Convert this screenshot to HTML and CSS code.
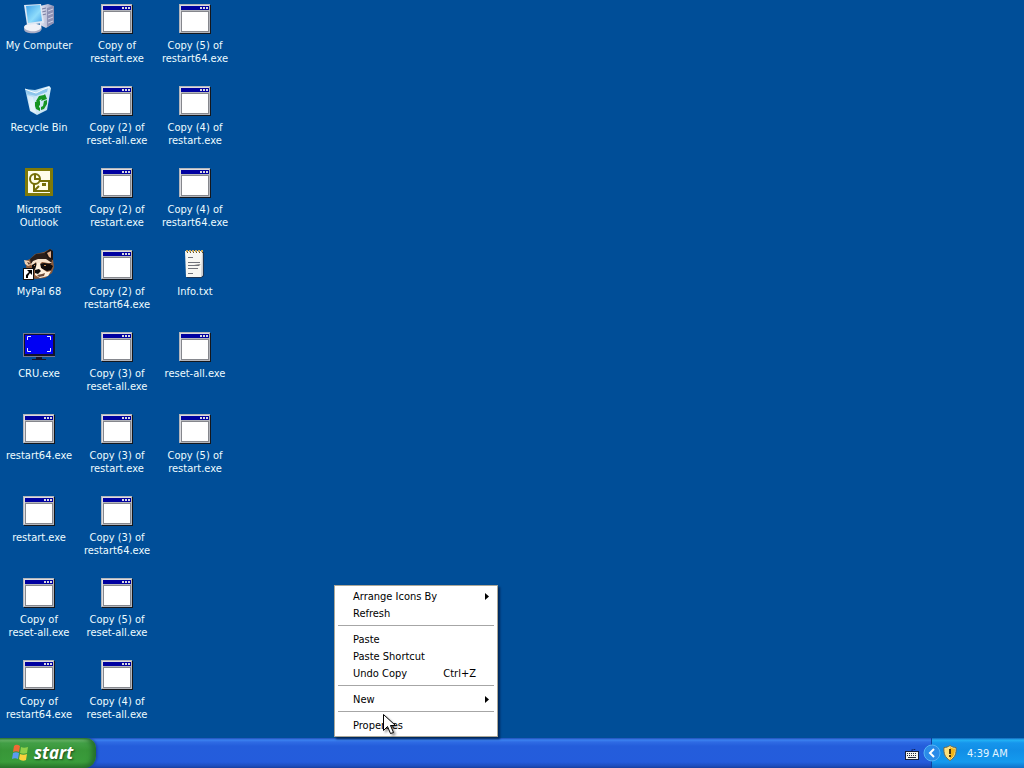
FILE: index.html
```html
<!DOCTYPE html>
<html lang="en">
<head>
<meta charset="utf-8">
<title>Desktop</title>
<link rel="stylesheet" href="styles.css">
</head>
<body>
<svg class="defs" aria-hidden="true">
  <defs>
    <linearGradient id="screen" x1="0" y1="0" x2="1" y2="1"><stop offset="0" stop-color="#3fa2ea"/><stop offset=".6" stop-color="#8fdcfb"/><stop offset="1" stop-color="#4aa4ea"/></linearGradient>
    <linearGradient id="case" x1="0" y1="0" x2="1" y2="0"><stop offset="0" stop-color="#e4e6f2"/><stop offset=".55" stop-color="#b9bdd6"/><stop offset="1" stop-color="#8a8fb2"/></linearGradient>
    <linearGradient id="bin" x1="0" y1="0" x2="1" y2="1"><stop offset="0" stop-color="#7dbdea"/><stop offset=".45" stop-color="#d4ecfa"/><stop offset="1" stop-color="#c4e0f0"/></linearGradient>
    <symbol id="exe" viewBox="0 0 32 32">
      <path fill="#15171c" d="M1 2h31v29H1z"/>
      <path fill="#b4b6bc" d="M0 1h31v29H0z"/>
      <path fill="#dcdce0" d="M1 2h29v1H1zM1 2h1v27H1z"/>
      <path fill="#85878d" d="M2 8h28v21H2z"/>
      <path fill="#fff" d="M3 9h26v19H3z"/>
      <path fill="#0000a0" d="M2 3h28v4H2z"/>
      <path fill="#d8d8e0" d="M21 4h2v2h-2zM24 4h2v2h-2zM27 4h2v2h-2z"/>
    </symbol>
  </defs>
</svg>
<main class="desktop">
  <button class="item"><svg class="icon" viewBox="0 0 32 32">
    <path fill="url(#case)" d="M17 3l8-2 6 2v17l-8 5-6-3z"/><path fill="#8d91b4" d="M24 5l7-2v17l-7 4z"/><path stroke="#777ca0" d="M19 6l4-1M19 9l4-1M19 12l4-1"/><path stroke="#cfd2e6" d="M25 8l5-2M25 12l5-2M25 16l5-2M25 20l5-2"/>
    <path fill="#a9acc4" d="M1 26c1-4 6-4 9-5l8 2c2 3 0 6-5 7-5 1-12 0-12-4z"/><path fill="#f1f1f7" d="M1 24c1-3 5-3 8-4l9 2c1 3-1 5-5 6-5 1-12-1-12-4z"/>
    <path fill="#dfe8f4" d="M1 2l17-1 3 19-17 2z"/><path fill="url(#screen)" d="M3 3l14-1 2 16-14 2z"/></svg><span class="label">My Computer</span></button>
  <button class="item"><svg class="icon" viewBox="0 0 32 32">
    <path fill="url(#bin)" d="M2 4l10 1 14-4 2 2-4 22-10 5-7-4z"/><path fill="#8ec6ec" d="M4 6l8 2 13-5-1 4-11 4-8-2z"/><path fill="none" stroke="#f4fbff" d="M2 4l5 2 6 2 8-4 6-2"/><path fill="#fff" opacity=".45" d="M4 10l6 2 3 16-5-2z"/>
    <g fill="#169522"><path d="M13 16l3-5 5-1 1-1 2 5-6 2 1-2-2 1-2 3z"/><path d="M21 16l3-1 0 4-3 5-3 1v-3l2-1z"/><path d="M12 17l5-1 0 5-1-1 0 2 1 1v3l-4-2-1-3z"/></g></svg><span class="label">Recycle Bin</span></button>
  <button class="item"><svg class="icon" viewBox="0 0 32 32">
    <path fill="#807a08" d="M2 1h28v28H2z"/><path fill="#fffde8" d="M5 4h22v22H5z"/><g fill="#fffde8" stroke="#746e08" stroke-width="2"><path d="M11 14h15v10H11z"/><circle cx="12" cy="12" r="5"/><path fill="none" d="M12 8v4h4M12 23l4-4"/><path fill="#746e08" stroke="none" d="M19 16h4v3h-4z"/></g></svg><span class="label">Microsoft Outlook</span></button>
  <button class="item"><svg class="icon" viewBox="0 0 32 32">
    <path fill="#8b5a3a" d="M2 12l5-2 5-5 9-2 6-3 2 1 1 9 1 8-2 6-7 5-10 1-8-8z"/>
    <path fill="#2b1e1a" d="M7 10l6-5 8-1 4 3 4 4-1 4-7-4-6 0-7 4z"/>
    <path fill="#1d1513" d="M21 4l6-4 3 2v9l-4-1z"/><path fill="#e3b18f" d="M24 4l4-2 0 7-2-1z"/>
    <path fill="#f0d0b2" d="M1 11l5 1 2 4-3 1-3-2z"/><path fill="#49302a" d="M4 13l3 1-1 2z"/>
    <path fill="#f7e3cd" d="M8 15l2-3 5-2 8 0 6 4-4 0-6-1-3 3-2 0-1-3-4 4z"/>
    <path fill="#0f0c0c" d="M9 16l4-2 1 4-3 3-2-2zM17 15l4-1 6 1 3 2-2 4-4 1-5-2-2-2z"/>
    <path fill="#fff0dc" d="M14 14l3 0 1 5 6 4 4-1-3 5-8 2-5-3 0-5z"/>
    <path fill="#0e0c0c" d="M12 21l4-1 2 2-3 3-3-1z"/><path fill="#6e4b38" d="M14 26l5-1 3-1-1 3-5 1z"/>
    <path fill="#c88c50" d="M21 16h2v1h-2zM11 16h1v1h-1z"/>
    <path fill="#111" d="M0 19h11v12H0z"/><path fill="#fff" d="M1 20h9v10H1z"/><path fill="#000" d="M4 21h5v5l-2-2-2 3v2H3v-3l3-3z"/></svg><span class="label">MyPal 68</span></button>
  <button class="item"><svg class="icon" viewBox="0 0 32 32">
    <path fill="#77798d" d="M0 2h32v24H0z"/><path fill="#14142a" d="M1 3h31v22H1zM13 26h6v2h4v1H9v-1h4z"/><path fill="#0000f4" d="M2 4h28v19H2z"/><path fill="none" stroke="#e2e6ff" d="M4.500 9V5.500H8M24 5.500h3.500V9M4.500 17v3.500H8M24 20.500h3.500V17"/></svg><span class="label">CRU.exe</span></button>
  <button class="item"><svg class="icon"><use href="#exe"/></svg><span class="label">restart64.exe</span></button>
  <button class="item"><svg class="icon"><use href="#exe"/></svg><span class="label">restart.exe</span></button>
  <button class="item"><svg class="icon"><use href="#exe"/></svg><span class="label">Copy of<br>reset-all.exe</span></button>
  <button class="item"><svg class="icon"><use href="#exe"/></svg><span class="label">Copy of<br>restart64.exe</span></button>

  <button class="item"><svg class="icon"><use href="#exe"/></svg><span class="label">Copy of<br>restart.exe</span></button>
  <button class="item"><svg class="icon"><use href="#exe"/></svg><span class="label">Copy (2) of<br>reset-all.exe</span></button>
  <button class="item"><svg class="icon"><use href="#exe"/></svg><span class="label">Copy (2) of<br>restart.exe</span></button>
  <button class="item"><svg class="icon"><use href="#exe"/></svg><span class="label">Copy (2) of<br>restart64.exe</span></button>
  <button class="item"><svg class="icon"><use href="#exe"/></svg><span class="label">Copy (3) of<br>reset-all.exe</span></button>
  <button class="item"><svg class="icon"><use href="#exe"/></svg><span class="label">Copy (3) of<br>restart.exe</span></button>
  <button class="item"><svg class="icon"><use href="#exe"/></svg><span class="label">Copy (3) of<br>restart64.exe</span></button>
  <button class="item"><svg class="icon"><use href="#exe"/></svg><span class="label">Copy (5) of<br>reset-all.exe</span></button>
  <button class="item"><svg class="icon"><use href="#exe"/></svg><span class="label">Copy (4) of<br>reset-all.exe</span></button>

  <button class="item"><svg class="icon"><use href="#exe"/></svg><span class="label">Copy (5) of<br>restart64.exe</span></button>
  <button class="item"><svg class="icon"><use href="#exe"/></svg><span class="label">Copy (4) of<br>restart.exe</span></button>
  <button class="item"><svg class="icon"><use href="#exe"/></svg><span class="label">Copy (4) of<br>restart64.exe</span></button>
  <button class="item"><svg class="icon" viewBox="0 0 32 32">
    <path fill="#1d3552" d="M7 3h18v24l-3 2H8z"/><path fill="#f7f7f2" d="M6 2h18v24l-2 2H7z"/><path fill="#c9ccd0" d="M23 3h1v23l-2 2z"/><path stroke="#c9a658" stroke-width="2" stroke-dasharray="2 1" d="M7 2h17"/><path stroke="#5c5130" stroke-dasharray="1 2" d="M8 3.500h16"/><path stroke="#70737a" d="M9 8.500h5M9 13.500h12M9 16.500h11l1-1M9 19.500h10M9 24.500h5"/></svg><span class="label">Info.txt</span></button>
  <button class="item"><svg class="icon"><use href="#exe"/></svg><span class="label">reset-all.exe</span></button>
  <button class="item"><svg class="icon"><use href="#exe"/></svg><span class="label">Copy (5) of<br>restart.exe</span></button>
</main>

<div class="menu" role="menu">
  <button class="entry" role="menuitem">Arrange Icons By<svg class="arrow" viewBox="0 0 4 7"><path d="M0 0l4 3.500L0 7z"/></svg></button>
  <button class="entry" role="menuitem">Refresh</button>
  <hr class="rule">
  <button class="entry" role="menuitem">Paste</button>
  <button class="entry" role="menuitem">Paste Shortcut</button>
  <button class="entry" role="menuitem">Undo Copy<span class="keys">Ctrl+Z</span></button>
  <hr class="rule">
  <button class="entry" role="menuitem">New<svg class="arrow" viewBox="0 0 4 7"><path d="M0 0l4 3.500L0 7z"/></svg></button>
  <hr class="rule">
  <button class="entry" role="menuitem">Properties</button>
</div>

<footer class="taskbar">
  <button class="start"><svg class="flag" viewBox="0 0 18 18">
    <path fill="#f06a35" d="M3 2c2-2 4-1 6 0L8 8C6 7 4 7 2 8z"/><path fill="#8fd04a" d="M10 3c2 1 4 1 7 0l-1 6c-2 1-5 1-7 0z"/><path fill="#5b9bf0" d="M2 9c2-1 4-1 6 0l-1 6c-2-1-4-1-6 0z"/><path fill="#fbd13c" d="M9 10c2 1 5 1 7 0l-1 6c-2 1-5 1-7-1z"/></svg>start</button>
  <div class="tray-outer">
    <svg class="keyboard" viewBox="0 0 14 13"><path fill="none" stroke="#10245e" stroke-dasharray="2 1" d="M7 4V2.500h3V1"/><path fill="#15203c" d="M0 4h14v9H0z"/><path fill="#f4f4ee" d="M1 5h12v7H1z"/><path stroke="#252b3c" stroke-dasharray="1 1" d="M2 6.500h10M2 8.500h10"/><path stroke="#252b3c" d="M3 10.500h8"/></svg>
  </div>
  <div class="tray">
    <button class="expand" aria-label="Show hidden icons"><svg viewBox="0 0 18 18"><circle cx="9" cy="9" r="8" fill="#2a8be8" stroke="#56b4f4"/><path fill="none" stroke="#fff" stroke-width="2" d="M11 5L7 9l4 4"/></svg></button>
    <svg class="shield" viewBox="0 0 14 16"><path fill="#fbe9a0" stroke="#7a6a3c" d="M7 .5c2 1.500 4 2 6 2 .5 6-1 10-6 13C2 12.500.5 8.500 1 2.500c2 0 4-.5 6-2z"/><path fill="#f2b416" d="M7 2c2 1 3 1.500 5 1.500 0 5-1 8-5 11z"/><path fill="#ffe27a" d="M7 2C5 3 4 3.500 2 3.500c0 5 1 8 5 11z"/><path fill="#4a3510" d="M6 4h2v5H6zM6 10h2v2H6z"/></svg>
    <time class="clock">4:39 AM</time>
  </div>
</footer>

<svg class="pointer" viewBox="0 0 14 22" aria-hidden="true"><path fill="#fff" stroke="#000" d="M.5.5v16l4-4 3 7 3-1-3-7h5z"/></svg>
</body>
</html>
```
FILE: styles.css
```css
* { box-sizing: border-box; }

body {
  display: flex;
  flex-direction: column;
  height: 100vh;
  margin: 0;
  overflow: hidden;
  background: #004e98;
  color: #fff;
  font: 11px/13px Tahoma, "DejaVu Sans Condensed", "DejaVu Sans", sans-serif;
}

button {
  margin: 0;
  padding: 0;
  border: 0;
  background: none;
  color: inherit;
  font: inherit;
}

.defs { position: absolute; width: 0; height: 0; }

.desktop {
  flex: 1;
  min-height: 0;
  display: grid;
  grid-auto-flow: column;
  grid-template-rows: repeat(auto-fill, 82px);
  grid-auto-columns: 78px;
}

.item {
  display: flex;
  flex-direction: column;
  align-items: center;
  gap: 4px;
  padding-top: 3px;
}

.icon { width: 32px; height: 32px; }

.label { color: #eefcff; }

.menu {
  position: absolute;
  left: 334px;
  top: 585px;
  width: 164px;
  padding: 2px;
  border: 1px solid #aca899;
  background: #fff;
  color: #000;
  box-shadow: 2px 2px 2px #00285a;
}

.entry {
  display: flex;
  align-items: center;
  justify-content: space-between;
  width: 100%;
  height: 17px;
  padding: 0 6px 0 16px;
}

.arrow { width: 4px; height: 7px; }
.keys { margin-right: 13px; }

.rule {
  height: 1px;
  margin: 3px 1px 5px;
  border: 0;
  background: #a6a6a6;
}

.taskbar {
  display: flex;
  height: 30px;
  background: linear-gradient(#1f4fb8, #3b82f0 2px, #2f6be4 4px, #245ddb 8px, #245cdc 24px, #1d4dbd 28px, #183f9f);
}

.start {
  display: flex;
  align-items: center;
  gap: 5px;
  width: 96px;
  padding-left: 11px;
  border-radius: 0 10px 12px 0;
  background: linear-gradient(#2b7a2f, #6cb96c 2px, #43a047 5px, #389638 12px, #3a9c3b 24px, #2b7a2c);
  box-shadow: inset -4px 0 5px #256f2b, 1px 0 3px #173f9c;
  font: italic bold 17px/22px "Open Sans", "Noto Sans", sans-serif;
  text-shadow: 1px 1px 2px #1c4a1c;
}

.flag { width: 18px; height: 18px; }

.tray-outer {
  display: flex;
  align-items: center;
  margin-left: auto;
  padding-right: 12px;
}

.keyboard { width: 14px; height: 13px; }

.tray {
  display: flex;
  align-items: center;
  width: 93px;
  border-left: 1px solid #10429c;
  background: linear-gradient(#1464b8, #23b2f5 2px, #1695ec 5px, #118ee6 12px, #149aee 24px, #0f70c8);
}

.expand { margin-left: -9px; width: 18px; height: 18px; }
.expand svg { display: block; }

.shield { width: 14px; height: 16px; margin-left: 2px; }

.clock { margin-left: 10px; color: #e2f6ff; white-space: nowrap; }

.pointer {
  position: absolute;
  left: 383px;
  top: 714px;
  width: 14px;
  height: 22px;
  filter: drop-shadow(2px 2px 1px #0006);
}
```
